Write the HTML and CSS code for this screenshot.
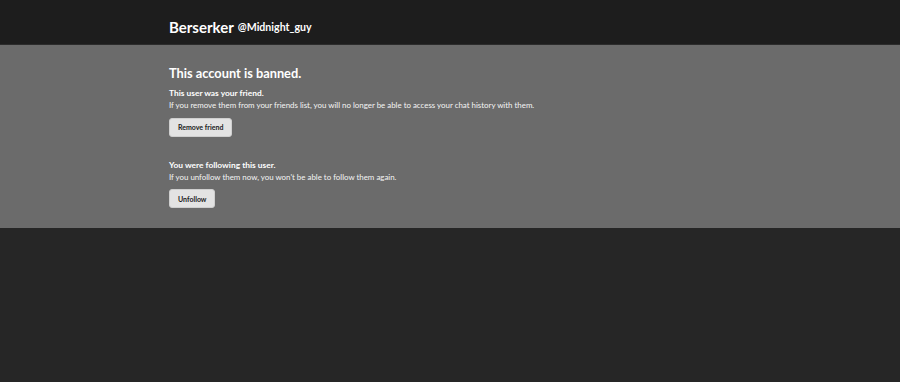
FILE: index.html
```html
<!DOCTYPE html>
<html lang="en">
    <head>
        <meta charset="UTF-8" />
        <meta name="viewport" content="width=device-width, initial-scale=1.0" />
        <title>Berserker</title>
        <link rel="stylesheet" href="styles.css">
    </head>
    <body>
        <header class="profile-header">
            <div class="container">
                <span class="display-name">Berserker</span>
                <span class="username">@Midnight_guy</span>
            </div>
        </header>
        <section class="banned-panel">
            <div class="container">
                <h1>This account is banned.</h1>
                <div class="notice">
                    <h2>This user was your friend.</h2>
                    <p>If you remove them from your friends list, you will no longer be able to access your chat history with them.</p>
                    <button class="btn">Remove friend</button>
                </div>
                <div class="notice">
                    <h2>You were following this user.</h2>
                    <p>If you unfollow them now, you won't be able to follow them again.</p>
                    <button class="btn">Unfollow</button>
                </div>
            </div>
        </section>
    </body>
</html>
```
FILE: styles.css
```css
body {
    margin: 0;
    background-color: #262626;
    font-family: Lato, 'Open Sans', sans-serif;
    color: #fff;
}
.container {
    width: 562px;
    margin: 0 auto;
}
.profile-header {
    background-color: #1d1d1d;
    height: 44px;
    border-bottom: 1px solid #2c2c2c;
}
.profile-header .container {
    display: flex;
    align-items: center;
    gap: 4px;
    padding-top: 18px;
}
.display-name {
    font-size: 15px;
    font-weight: bold;
}
.username {
    font-size: 10.6px;
    font-weight: bold;
}
.banned-panel {
    background-color: #6b6b6b;
    padding: 20px 0 20px;
}
h1 {
    margin: 0 0 6px;
    font-size: 12.8px;
    font-weight: bold;
}
.notice {
    margin-bottom: 22px;
}
.notice:last-child {
    margin-bottom: 0;
}
h2 {
    margin: 0;
    font-size: 8.4px;
    font-weight: bold;
    line-height: 12px;
}
p {
    margin: 0 0 3px;
    font-size: 7.9px;
    line-height: 12px;
    color: #f4f4f4;
}
.btn {
    background-color: #e3e3e3;
    color: #1b1b1b;
    border: 1px solid #cfcfcf;
    border-radius: 3px;
    font-family: Lato, sans-serif;
    font-size: 7px;
    font-weight: bold;
    height: 19px;
    padding: 0 8px;
    cursor: pointer;
}
```
